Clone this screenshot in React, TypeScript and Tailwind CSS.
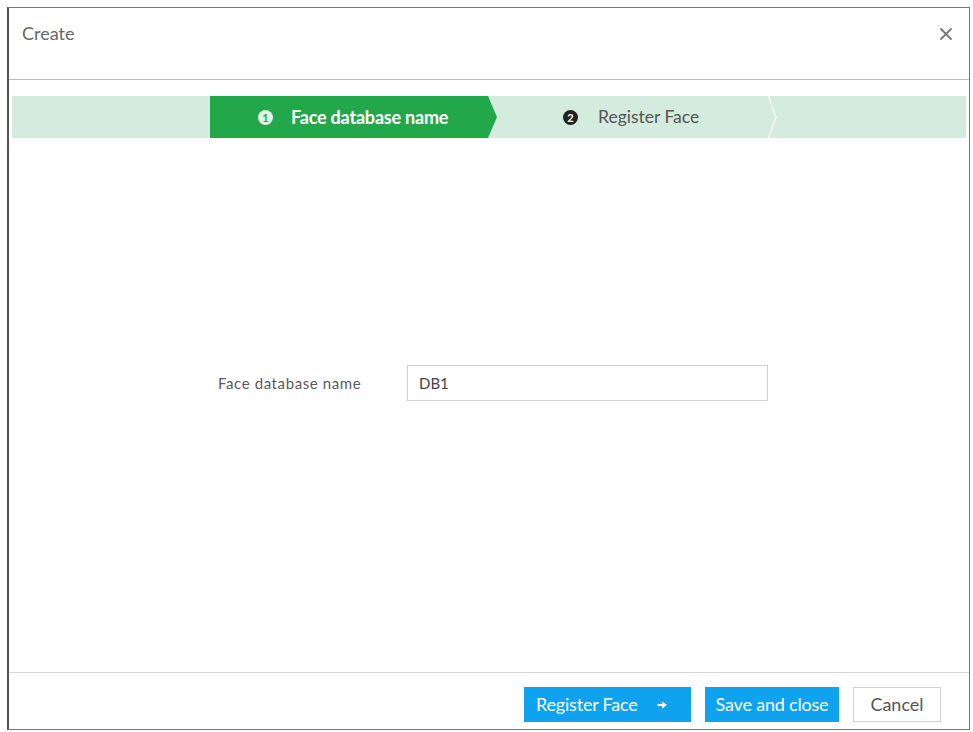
import React from "react";

export default function App() {
  return (
    <div className="w-[973px] h-[732px] bg-white overflow-hidden" style={{ fontFamily: "Lato, 'Open Sans', sans-serif" }}>
      <div className="ml-[7px] mt-[7px] w-[963px] h-[723px] border border-[#777] border-l-2 border-l-[#555] flex flex-col">
        {/* Header */}
        <div className="h-[72px] border-b border-[#bdbdbd] flex items-center justify-between pl-[13px] pr-[17px] pb-[20px]">
          <span className="text-[18px] text-[#666]">Create</span>
          <svg width="12" height="12" viewBox="0 0 12 12" className="text-[#777]">
            <path d="M1 1 L11 11 M11 1 L1 11" stroke="currentColor" strokeWidth="1.8" strokeLinecap="round" />
          </svg>
        </div>

        {/* Steps bar */}
        <div className="mt-[16px] mx-[3px] h-[42px] bg-[#d3ecdd] flex">
          <div className="w-[198px] shrink-0" />
          <div className="w-[287px] shrink-0 bg-[#22a84b] flex items-center pl-[48px] gap-[18px] [clip-path:polygon(0_0,278px_0,100%_50%,278px_100%,0_100%)]">
            <span className="w-[15px] h-[15px] rounded-full bg-[#e3f5e8] text-[#22a84b] text-[11px] font-bold flex items-center justify-center leading-none">1</span>
            <span className="text-[18px] font-bold text-white tracking-[-0.2px]">Face database name</span>
          </div>
          <div className="w-[271px] shrink-0 flex items-center pl-[66px] gap-[20px]">
            <span className="w-[15px] h-[15px] rounded-full bg-[#222] text-white text-[11px] font-bold flex items-center justify-center leading-none">2</span>
            <span className="text-[17.5px] text-[#555]">Register Face</span>
          </div>
          <svg width="9" height="42" viewBox="0 0 9 42" className="shrink-0">
            <path d="M0.5 0 L8 21 L0.5 42" fill="none" stroke="#ffffff" strokeWidth="1.2" />
          </svg>
        </div>

        {/* Body */}
        <div className="flex-1 pt-[227px] pl-[209px]">
          <div className="flex items-center">
            <span className="w-[189px] text-[15px] text-[#5a5a5a] tracking-[0.6px]">Face database name</span>
            <div className="w-[361px] h-[36px] border border-[#cfcfcf] flex items-center pl-[11px] text-[15px] text-[#444]">DB1</div>
          </div>
        </div>

        {/* Footer */}
        <div className="h-[57px] border-t border-[#d6d6d6] flex justify-end items-start pt-[14px] pr-[28px] gap-[14px]">
          <button className="w-[167px] h-[35px] bg-[#0ea2ef] text-white text-[18px] flex items-center justify-start pl-[12px] gap-[19px] tracking-[-0.2px]">
            <span>Register Face</span>
            <svg width="11" height="10" viewBox="0 0 11 10">
              <path d="M0.5 5 H6" stroke="white" strokeWidth="2.2" />
              <path d="M5 1.5 L10 5 L5 8.5 Z" fill="white" />
            </svg>
          </button>
          <button className="w-[134px] h-[35px] bg-[#0ea2ef] text-white text-[18px] flex items-center justify-center tracking-[-0.2px]">Save and close</button>
          <button className="w-[88px] h-[35px] bg-white border border-[#d0d0d0] text-[#555] text-[18px] flex items-center justify-center">Cancel</button>
        </div>
      </div>
    </div>
  );
}
